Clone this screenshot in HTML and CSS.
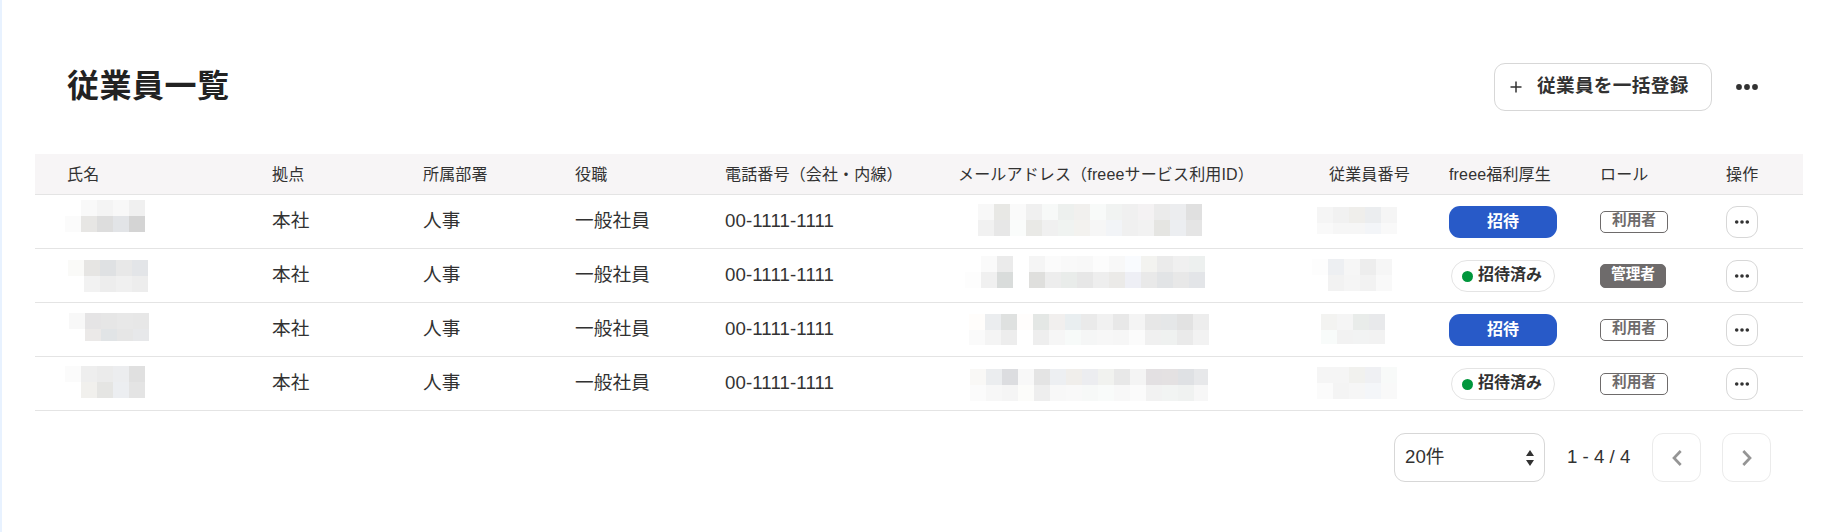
FILE: index.html
```
<!DOCTYPE html>
<html lang="ja">
<head>
<meta charset="utf-8">
<title>従業員一覧</title>
<link rel="stylesheet" href="styles.css">
</head>
<body>
<main class="page">
  <header class="page-header">
    <h1 class="title">従業員一覧</h1>
    <div class="actions">
      <button class="bulk-button">
        <svg class="plus" width="12" height="12" viewBox="0 0 12 12"><path d="M6 .5v11M.5 6h11" stroke="#323232" stroke-width="1.5" fill="none"/></svg>
        <span>従業員を一括登録</span>
      </button>
      <svg class="more" width="24" height="8" viewBox="0 0 24 8" fill="#323232"><circle cx="4" cy="4" r="2.900"/><circle cx="12" cy="4" r="2.900"/><circle cx="20" cy="4" r="2.900"/></svg>
    </div>
  </header>
  <section class="table">
    <div class="row head">
      <span>氏名</span><span>拠点</span><span>所属部署</span><span>役職</span><span>電話番号（会社・内線）</span><span class="mail-head">メールアドレス（freeeサービス利用ID）</span><span>従業員番号</span><span>freee福利厚生</span><span>ロール</span><span>操作</span>
    </div>
    <div id="rows"></div>
  </section>
  <footer class="pager">
    <div class="select"><span>20件</span>
      <svg width="8" height="16" viewBox="0 0 8 16" fill="#323232"><path d="M4 0l4 6H0zM4 16l4-6H0z"/></svg>
    </div>
    <span class="range">1 - 4 / 4</span>
    <button class="nav"><svg width="10" height="16" viewBox="0 0 10 16"><path d="M8.700 1L2 8l6.700 7" fill="none" stroke="#959595" stroke-width="2.700"/></svg></button>
    <button class="nav"><svg width="10" height="16" viewBox="0 0 10 16"><path d="M1.300 1L8 8l-6.700 7" fill="none" stroke="#959595" stroke-width="2.700"/></svg></button>
  </footer>
</main>
<script src="app.js"></script>
</body>
</html>
```
FILE: styles.css
```
* { box-sizing: border-box; }
body {
  margin: 0;
  background: #fff;
  color: #323232;
  font-family: "Liberation Sans", "Noto Sans CJK JP", sans-serif;
  font-size: 18.67px;
}
button { font: inherit; color: inherit; background: #fff; padding: 0; }
.page { height: 532px; border-left: 2px solid #e8f2ff; padding: 62px 31px 0 33px; }
.page-header { display: flex; justify-content: space-between; height: 92px; padding: 0 44px 0 32px; }
.title { margin: 0; font-size: 32px; line-height: 48px; height: 48px; color: #222; letter-spacing: .5px; }
.actions { display: flex; align-items: center; height: 48px; gap: 23px; margin-top: 1px; }
.bulk-button {
  display: flex; align-items: center; gap: 15px;
  width: 218px; height: 48px; padding: 0 0 0 15px;
  border: 1px solid #d7d7d7; border-radius: 11px; font-weight: 700; white-space: nowrap;
}
.bulk-button span { line-height: 28px; margin-top: -2px; letter-spacing: .3px; }
.plus { flex: none; }
.row {
  display: grid;
  grid-template-columns: 205px 151px 152px 150px 234px 370px 120px 151px 126px 1fr;
  align-items: center;
  height: 54px; padding-left: 32px;
  border-bottom: 1px solid #e4e4e4;
  white-space: nowrap; line-height: 28px;
}
.head { height: 41px; background: #f7f5f6; font-size: 16px; line-height: 24px; padding-top: 2px; letter-spacing: .16px; }
.mail-head { margin-left: -1px; }
.text { margin-top: -1px; letter-spacing: .1px; }
.mosaic { display: block; align-self: start; overflow: visible; }
.invite {
  width: 108px; height: 32px;
  border: 0; border-radius: 11px; background: #285ac8;
  color: #fff; font-size: 16px; font-weight: 700; line-height: 30px; padding-bottom: 1px;
}
.invited {
  display: flex; align-items: center; gap: 5px;
  width: 104px; height: 32px; margin: 0 0 0 2px; padding-left: 10px;
  border: 1px solid #e4e4e4; border-radius: 16px;
  font-size: 16px; font-weight: 700; line-height: 30px;
}
.invited span { margin-top: -2px; }
.dot { flex: none; width: 11px; height: 11px; border-radius: 50%; background: #00963c; }
.badge {
  width: 68px; height: 22px; padding-left: 11px;
  border: 1px solid #6e6b6b; border-radius: 5px;
  color: #6e6b6b; font-size: 14.67px; font-weight: 700; line-height: 16px;
}
.badge.admin { width: 66px; height: 24px; padding-left: 10px; background: #6e6b6b; color: #fff; line-height: 18px; }
.invite, .invited, .badge, .op { margin-top: 1px; }
.op {
  display: flex; align-items: center; justify-content: center;
  width: 32px; height: 32px;
  border: 1px solid #d7d7d7; border-radius: 11px;
}
.pager { display: flex; align-items: center; justify-content: flex-end; margin-top: 22px; padding-right: 32px; height: 49px; }
.select {
  display: flex; align-items: center; justify-content: space-between;
  width: 151px; height: 49px; padding: 0 10px;
  border: 1px solid #d7d7d7; border-radius: 11px; line-height: 28px;
}
.select span { margin-top: -2px; }
.range { width: 64px; margin: -2px 21px 0 22px; white-space: nowrap; }
.nav {
  display: flex; align-items: center; justify-content: center;
  width: 49px; height: 49px; border: 1px solid #ebebeb; border-radius: 11px;
}
.nav + .nav { margin-left: 21px; }
```
FILE: app.js
```
// Each masked value: [left offset, top offset, height of second band, first band, second band].
// Colours are two-digit greys or full hex values; "-" leaves the cell empty.
const masks = [
  {
    name: [-2, 5, 16, "- f9 f4 f8 f0", "fb e7e6e4 dd e2e4e7 d4"],
    mail: [19, 9, 16, "f8 e8e8e5 fa f0 f7f9f8 edf0ee f1f0ee f8faf9 f1f3f2 f0 f4f2f3 eb ecedef e0", "f1 e7 fafcfb e9e9e6 f0 f0f3f1 f3f2ef f6 f2f4f7 f0 f2 e5e5e2 eceef1 e5"],
    no: [-12, 12, 11, "f5 f1 efeeeb ebedef f5", "f9 f6 f6 f3f5f8 f9"]
  },
  {
    name: [1, 11, 16, "fafaf8 e6e5e3 dfe1e3 e8 e3e5e8", "- f2 ed f0 ed"],
    mail: [6, 7, 16, "- fa eb - f5 fb f9 f8 fc f8 f9fbfe f3f3f0 eb f0 edf0ef", "fd f0 d9dcdb - dfdfdd ed e9ecea e7 ee ebeae8 eeeff5 e9 e2e4e6 e8 e3e5e8"],
    no: [-17, 10, 16, "fd edeff2 f6 ed f6", "- f2 f5 f2 f9"]
  },
  {
    name: [2, 10, 12, "f8 e5e4e5 e6 e8 e7", "- ebe9e8 e1e4e6 e6 e7e8ea"],
    mail: [10, 11, 15, "fffdfb ebedef dfe1e0 fffdfc e4e7e5 f1efee e9eef0 ea f1 e8 f4 e7 e5e7e8 e2 ed", "fa f4 ed - ee f6 f7faf9 f5f6f6 f7 f6 fb f0 eff1f0 ea f2"],
    no: [-8, 11, 14, "f3f3f1 f5 e9ecea e8e9eb", "f8fbfa f2 f2f3f3 f2"]
  },
  {
    name: [-2, 9, 16, "fb ee eb ecedef e0", "- f1f0ed e5e5e3 eceef1 e4"],
    mail: [11, 12, 16, "f9f8f6 ebedef dcdde0 f8 e4 edeff2 f0eeeb ecedf0 f1f2ef e8 f4 e3e0e2 e4e1e2 dfe1e4 e7e8ea", "fb f7 f5 fcfcfa ee f8 f9 f7f9f8 f9fbfa f8 fb f2 f2f4f3 f0f2f1 f7", 238],
    no: [-12, 10, 16, "f5 f5 f1f1ee eff0f3 f8faf9", "fb f4 f6 f4f6f9 f9"]
  }
];
// An optional sixth entry limits the total width.
const mosaic = ([x, y, h2, first, second, max = 999]) => {
  let rects = "";
  [first, second].forEach((band, b) => band.split(" ").forEach((c, i) => {
    if (c === "-") return;
    const fill = c.length === 2 ? c + c + c : c;
    rects += `<rect x="${x + i * 16}" y="${y + b * 16}" width="${Math.min(16, max - i * 16)}" height="${b ? h2 : 16}" fill="#${fill}"/>`;
  }));
  return `<svg class="mosaic" width="10" height="50" shape-rendering="crispEdges">${rects}</svg>`;
};
const dots = '<svg width="16" height="6" viewBox="0 0 16 6" fill="#323232"><circle cx="2.700" cy="3" r="1.800"/><circle cx="8" cy="3" r="1.800"/><circle cx="13.300" cy="3" r="1.800"/></svg>';
document.getElementById("rows").innerHTML = masks.map((m, i) => `
  <div class="row">
    ${mosaic(m.name)}
    <span class="text">本社</span><span class="text">人事</span><span class="text">一般社員</span><span class="text">00-1111-1111</span>
    ${mosaic(m.mail)}
    ${mosaic(m.no)}
    ${i % 2 ? '<div class="invited"><i class="dot"></i><span>招待済み</span></div>' : '<button class="invite">招待</button>'}
    ${i === 1 ? '<div class="badge admin">管理者</div>' : '<div class="badge">利用者</div>'}
    <button class="op">${dots}</button>
  </div>`).join("");
```
